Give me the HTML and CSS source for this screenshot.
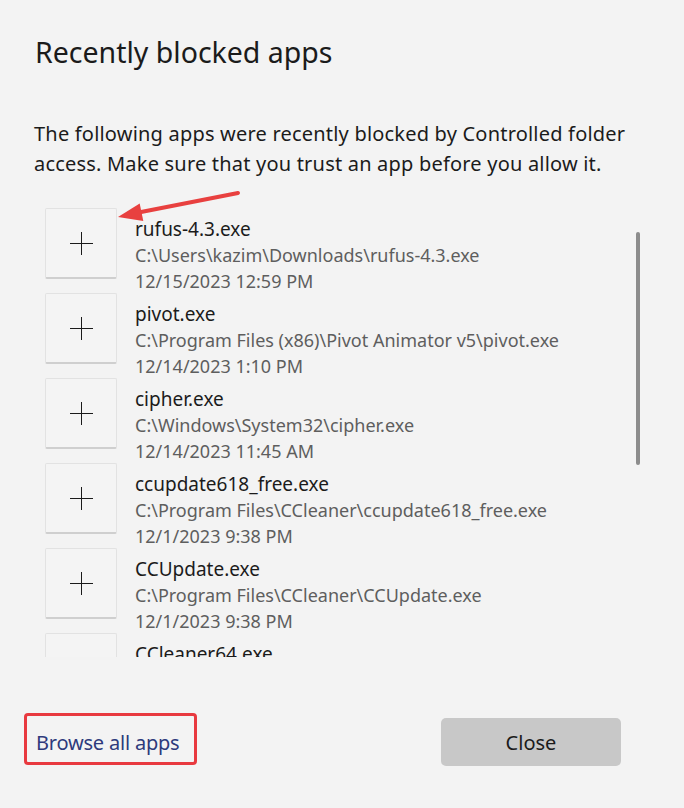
FILE: index.html
```html
<!DOCTYPE html>
<html lang="en">
<head>
<meta charset="utf-8">
<title>Recently blocked apps</title>
<link rel="stylesheet" href="styles.css">
</head>
<body>
<div class="dialog">
  <h1 class="title">Recently blocked apps</h1>
  <p class="desc">The following apps were recently blocked by Controlled folder access. Make sure that you trust an app before you allow it.</p>

  <div class="list-wrap">
    <div class="items">
      <div class="row">
        <button class="tile"><span class="plus"></span></button>
        <div class="info">
          <div class="name">rufus-4.3.exe</div>
          <div class="meta">C:\Users\kazim\Downloads\rufus-4.3.exe</div>
          <div class="meta">12/15/2023 12:59 PM</div>
        </div>
      </div>
      <div class="row">
        <button class="tile"><span class="plus"></span></button>
        <div class="info">
          <div class="name">pivot.exe</div>
          <div class="meta">C:\Program Files (x86)\Pivot Animator v5\pivot.exe</div>
          <div class="meta">12/14/2023 1:10 PM</div>
        </div>
      </div>
      <div class="row">
        <button class="tile"><span class="plus"></span></button>
        <div class="info">
          <div class="name">cipher.exe</div>
          <div class="meta">C:\Windows\System32\cipher.exe</div>
          <div class="meta">12/14/2023 11:45 AM</div>
        </div>
      </div>
      <div class="row">
        <button class="tile"><span class="plus"></span></button>
        <div class="info">
          <div class="name">ccupdate618_free.exe</div>
          <div class="meta">C:\Program Files\CCleaner\ccupdate618_free.exe</div>
          <div class="meta">12/1/2023 9:38 PM</div>
        </div>
      </div>
      <div class="row">
        <button class="tile"><span class="plus"></span></button>
        <div class="info">
          <div class="name">CCUpdate.exe</div>
          <div class="meta">C:\Program Files\CCleaner\CCUpdate.exe</div>
          <div class="meta">12/1/2023 9:38 PM</div>
        </div>
      </div>
      <div class="row">
        <button class="tile"><span class="plus"></span></button>
        <div class="info">
          <div class="name">CCleaner64.exe</div>
        </div>
      </div>
    </div>
    <div class="scrolltrack"><div class="thumb"></div></div>
  </div>

  <div class="footer">
    <div class="highlight"><a class="browse" href="#">Browse all apps</a></div>
    <button class="close">Close</button>
  </div>

  <svg class="arrow" width="140" height="50" viewBox="110 185 140 50" aria-hidden="true">
    <line x1="238" y1="193" x2="136" y2="213" stroke="#e8403f" stroke-width="4" stroke-linecap="round"/>
    <polygon points="118,217 139.7,203.5 143.3,221.1" fill="#e8403f"/>
  </svg>
</div>
</body>
</html>
```

FILE: styles.css
```css
* { box-sizing: border-box; }
html, body {
  margin: 0;
  padding: 0;
  background: #f3f3f3;
}
body {
  font-family: "Noto Sans", "Open Sans", sans-serif;
  color: #1b1b1b;
  width: 684px;
  height: 808px;
  overflow: hidden;
}
.dialog {
  position: relative;
  padding: 34px 0 0 0;
}
.title {
  margin: 0 0 0 35px;
  font-size: 28.5px;
  font-weight: 400;
  line-height: 36px;
  letter-spacing: 0;
}
.desc {
  margin: 49px 8px 0 34px;
  font-size: 20px;
  line-height: 30px;
  letter-spacing: 0.2px;
}
.list-wrap {
  margin-top: 29px;
  height: 449px;
  overflow: hidden;
  display: flex;
  padding-left: 45px;
}
.items {
  flex: 1;
  display: flex;
  flex-direction: column;
}
.row {
  display: flex;
  height: 85px;
  flex-shrink: 0;
}
.tile {
  width: 72px;
  height: 71px;
  flex-shrink: 0;
  padding: 0;
  background: #f4f4f4;
  border: 1px solid #e2e2e2;
  border-bottom: 2px solid #cfcfcf;
  border-radius: 2px;
  display: flex;
  align-items: center;
  justify-content: center;
}
.plus {
  position: relative;
  width: 23px;
  height: 23px;
  display: block;
}
.plus::before, .plus::after {
  content: "";
  position: absolute;
  background: #1a1a1a;
}
.plus::before { left: 0; right: 0; top: 11px; height: 1.4px; }
.plus::after { top: 0; bottom: 0; left: 11px; width: 1.4px; }
.info {
  margin-left: 18px;
  padding-top: 8px;
  white-space: nowrap;
}
.name {
  font-size: 19px;
  line-height: 26px;
  color: #1b1b1b;
}
.meta {
  font-size: 18px;
  line-height: 26px;
  color: #5e5e5e;
}
.scrolltrack {
  width: 4px;
  margin-right: 44px;
  padding-top: 24px;
}
.thumb {
  width: 4px;
  height: 233px;
  border-radius: 2px;
  background: #8c8c8c;
}
.footer {
  margin-top: 56px;
  display: flex;
  justify-content: space-between;
  align-items: flex-start;
  padding: 0 63px 0 24px;
}
.highlight {
  width: 173px;
  height: 52px;
  border: 3px solid #e8393f;
  border-radius: 4px;
  padding: 14px 0 0 9px;
}
.browse {
  font-size: 20px;
  line-height: 26px;
  color: #2e3a7c;
  text-decoration: none;
  letter-spacing: -0.2px;
  white-space: nowrap;
}
.close {
  margin-top: 5px;
  width: 180px;
  height: 48px;
  border: none;
  border-radius: 5px;
  background: #c8c8c8;
  font-family: inherit;
  font-size: 20px;
  color: #1b1b1b;
}
.arrow {
  position: absolute;
  left: 110px;
  top: 185px;
}
```
